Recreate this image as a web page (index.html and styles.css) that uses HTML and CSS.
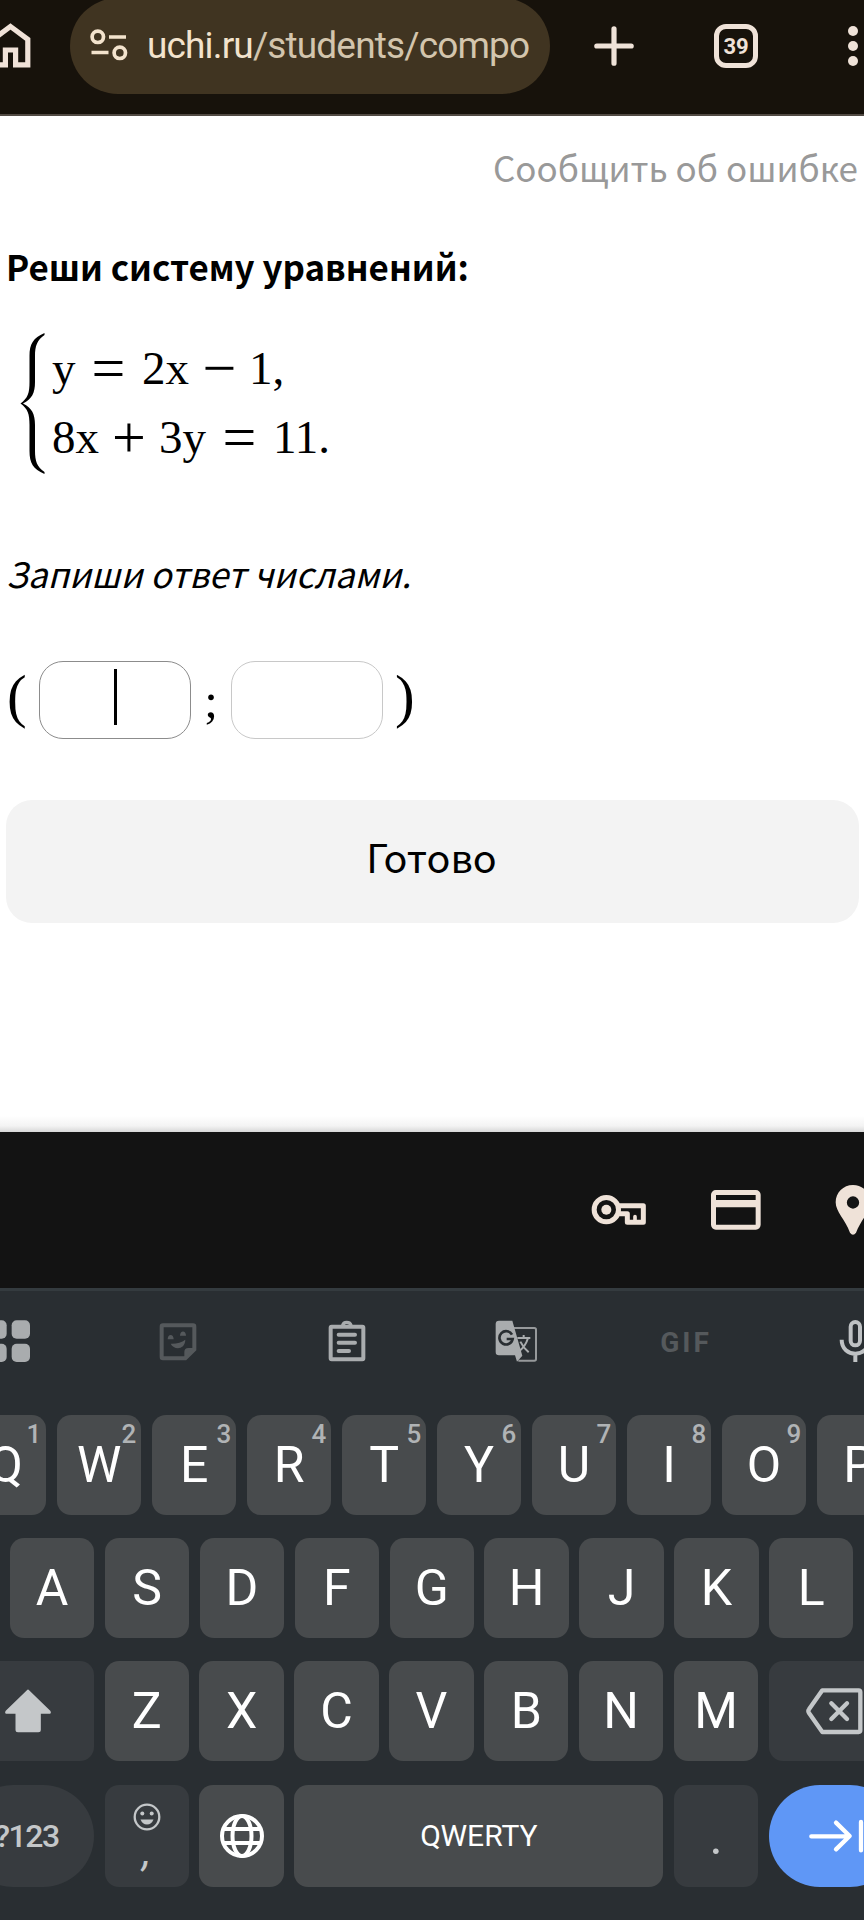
FILE: index.html
```html
<!DOCTYPE html>
<html lang="ru">

<head>
    <meta charset="UTF-8">
    <title>Реши систему уравнений</title>
    <link rel="stylesheet" href="styles.css">
</head>

<body>

    <header class="browser">
        <svg class="home" viewBox="0 0 70 92">
            <path d="M10.5 26.5 L27.8 39.3 V64.8 H15.6 V50 H5.4 V64.8 H-6.8 V39.3 Z" />
        </svg>
        <div class="url">
            <svg class="tune" viewBox="0 0 38 32">
                <circle cx="7.8" cy="7.8" r="5.7" />
                <path d="M19 8 H36 M1.5 23.5 H18.5" />
                <circle cx="29.8" cy="23.8" r="5.7" />
            </svg>
            <span class="address">uchi.ru<span class="path">/students/compo</span></span>
        </div>
        <svg class="plus" viewBox="0 0 40 40">
            <path d="M20 2.8 V37.2 M2.8 20 H37.2" />
        </svg>
        <div class="tabs">39</div>
        <div class="menu"><i></i><i></i><i></i></div>
    </header>

    <main class="task">
        <a class="report">Сообщить об ошибке</a>
        <h2 class="title">Реши систему уравнений:</h2>

        <div class="system">
            <svg class="brace" viewBox="0 0 26 144">
                <path d="M24.500 1 C13 6 9.500 12 9.500 24 V50 C9.500 61 8 66 0.500 71.500 C8 77 9.500 82 9.500 93 V119 C9.500 131 13 137 24.500 142 V140 C17 135 15 129 15 119 V93 C15 82 12 76 3 71.500 C12 67 15 61 15 50 V24 C15 14 17 8 24.500 3 Z" />
            </svg>
            <div class="equations">
                <div class="equation"><span class="y1">y</span><span class="op eq1">=</span><span class="x1">2x</span><span class="op minus">−</span><span>1,</span></div>
                <div class="equation"><span class="x2">8x</span><span class="op plus-sign">+</span><span class="y2">3y</span><span class="op eq2">=</span><span>11.</span></div>
            </div>
        </div>

        <p class="hint">Запиши ответ числами.</p>

        <div class="answer">
            <span class="paren">(</span>
            <div class="field active"><span class="caret"></span></div>
            <span class="semicolon">;</span>
            <div class="field"></div>
            <span class="paren">)</span>
        </div>

        <button class="done" type="button">Готово</button>
    </main>

    <div class="autofill">
        <div class="slot">
            <svg width="60" height="60" viewBox="471 180 180 180">
                <g fill="none" stroke="#efe2d8" stroke-width="15" stroke-linejoin="round">
                    <circle cx="523" cy="269" r="36.5" />
                    <path d="M554 257 H634 V307 H586 V281 H554" />
                    <path d="M609 305 V290" stroke-width="11" stroke-linecap="round" />
                </g>
                <circle cx="523" cy="269" r="15" fill="#efe2d8" />
            </svg>
        </div>
        <div class="slot">
            <svg width="60" height="60" viewBox="822 180 180 180">
                <rect x="844.5" y="217.5" width="134" height="104" rx="7" fill="none" stroke="#efe2d8" stroke-width="15" />
                <path d="M845 240 H979 V262 H845 Z" fill="#efe2d8" />
            </svg>
        </div>
        <div class="slot">
            <svg width="60" height="60" viewBox="1174 180 180 180">
                <path fill="#efe2d8" fill-rule="evenodd" d="M1264 195 C1235 195 1212 218 1212 247 C1212 275 1240 298 1255 338 Q1264 350 1273 338 C1288 298 1316 275 1316 247 C1316 218 1293 195 1264 195 Z M1264 229 A18.5 18.5 0 1 1 1264 266 A18.5 18.5 0 1 1 1264 229 Z" />
            </svg>
        </div>
    </div>

    <section class="keyboard">
        <div class="tools">
            <div class="tool">
                <svg width="42" height="42" viewBox="0 0 126 126" fill="#a9acae">
                    <rect x="1" y="1" width="55" height="55" rx="15" />
                    <rect x="71" y="1" width="55" height="55" rx="15" />
                    <rect x="1" y="71" width="55" height="55" rx="15" />
                    <rect x="71" y="71" width="55" height="55" rx="15" />
                </svg>
            </div>
            <div class="tool">
                <svg width="42" height="42" viewBox="472 150 126 126">
                    <path d="M490 166 H580 Q584 166 584 170 V238 L557 265 H490 Q486 265 486 261 V170 Q486 166 490 166 Z" fill="none" stroke="#55595c" stroke-width="12" />
                    <path d="M554 268 V246 Q554 234 566 234 H588 Z M504 208 C504 191 522 191 522 208 Z M541 197 C541 180 559 180 559 197 Z M513 221 Q540 222 557 209 C556 240 523 241 513 221 Z" fill="#55595c" />
                </svg>
            </div>
            <div class="tool">
                <svg width="42" height="42" viewBox="979 147 126 126" fill="none" stroke="#a9acae" stroke-width="12">
                    <rect x="993" y="167" width="98" height="98" rx="3" />
                    <path d="M1029 163 Q1031 154 1041 154 Q1052 154 1054 163" stroke-width="10" />
                    <path d="M1017 191 H1066 M1017 215.500 H1066 M1017 240 H1048" stroke-linecap="round" />
                </svg>
            </div>
            <div class="tool">
                <svg width="42" height="42" viewBox="188 602 126 126">
                    <path d="M245 626 H306 Q311 626 311 631 V719 Q311 724 306 724 H258" fill="none" stroke="#96999b" stroke-width="6" />
                    <path d="M200 604 H240 L270 709 L254 727 L248 708 H200 Q190 708 190 698 V614 Q190 604 200 604 Z" fill="#a9acae" />
                    <path d="M239 646 A20 20 0 1 0 241 659 H223" fill="none" stroke="#292e32" stroke-width="8" />
                    <path d="M255 656 H294 M274 647 V656 M287 656 Q280 681 259 697 M264 667 Q272 684 289 699" fill="none" stroke="#a9acae" stroke-width="6" />
                </svg>
            </div>
            <div class="tool gif">GIF</div>
            <div class="tool">
                <svg width="42" height="42" viewBox="1206 600 126 126" fill="none" stroke="#bfc2c4" stroke-width="12">
                    <rect x="1256" y="606" width="28" height="70" rx="14" />
                    <path d="M1229 659 C1229 715 1311 715 1311 659 M1270 702 V726" />
                </svg>
            </div>
        </div>

        <div class="row numbers">
            <div class="key first"><sup>1</sup>Q</div>
            <div class="key"><sup>2</sup>W</div>
            <div class="key"><sup>3</sup>E</div>
            <div class="key"><sup>4</sup>R</div>
            <div class="key"><sup>5</sup>T</div>
            <div class="key"><sup>6</sup>Y</div>
            <div class="key"><sup>7</sup>U</div>
            <div class="key"><sup>8</sup>I</div>
            <div class="key"><sup>9</sup>O</div>
            <div class="key">P</div>
        </div>

        <div class="row middle">
            <div class="key">A</div>
            <div class="key">S</div>
            <div class="key">D</div>
            <div class="key">F</div>
            <div class="key">G</div>
            <div class="key">H</div>
            <div class="key">J</div>
            <div class="key">K</div>
            <div class="key">L</div>
        </div>

        <div class="row letters">
            <div class="key wide dark">
                <svg width="50" height="50" viewBox="9 168 150 150">
                    <path d="M84 181 L149 244 Q152 249 147 249 H120 V299 Q120 304 115 304 H54 Q49 304 49 299 V249 H21 Q16 249 19 244 Z" fill="#c4c7c9" stroke="#c4c7c9" stroke-width="5" stroke-linejoin="round" />
                </svg>
            </div>
            <div class="key">Z</div>
            <div class="key">X</div>
            <div class="key">C</div>
            <div class="key">V</div>
            <div class="key">B</div>
            <div class="key">N</div>
            <div class="key">M</div>
            <div class="key wide dark">
                <svg width="60" height="50" viewBox="1118 168 180 150" fill="none" stroke="#c4c7c9" stroke-linejoin="round" stroke-linecap="round">
                    <path d="M1170 181 H1279 Q1284 181 1284 186 V301 Q1284 306 1279 306 H1170 L1130 249 Q1126 243 1130 238 Z" stroke-width="13" />
                    <path d="M1197 220 L1244 267 M1244 220 L1197 267" stroke-width="13" />
                </svg>
            </div>
        </div>

        <div class="row bottom">
            <div class="key wide dark round symbols">?123</div>
            <div class="key dark comma">
                <svg width="28" height="28" viewBox="0 0 28 28">
                    <circle cx="14" cy="14" r="12.3" fill="none" stroke="#c4c7c9" stroke-width="2.3" />
                    <circle cx="9.300" cy="10.500" r="2" fill="#c4c7c9" />
                    <circle cx="18.700" cy="10.500" r="2" fill="#c4c7c9" />
                    <path d="M7.500 16.500 H20.500 Q18.500 21.500 14 21.500 Q9.500 21.500 7.500 16.500 Z" fill="#c4c7c9" />
                </svg>
                <span>,</span>
            </div>
            <div class="key">
                <svg width="46" height="46" viewBox="0 0 46 46" fill="none" stroke="#fff" stroke-width="4">
                    <circle cx="23" cy="23" r="20" />
                    <ellipse cx="23" cy="23" rx="9.500" ry="20" />
                    <path d="M4.500 16 H41.500 M4.500 30 H41.500" />
                </svg>
            </div>
            <div class="key space">QWERTY</div>
            <div class="key dark period">.</div>
            <div class="key wide round enter">
                <svg width="60" height="50" viewBox="1118 543 180 150" fill="none" stroke="#fff" stroke-width="13" stroke-linecap="round" stroke-linejoin="round">
                    <path d="M1137 619 H1250 M1211 578 L1252 618 L1211 658 M1286 576 V661" />
                </svg>
            </div>
        </div>
    </section>

</body>

</html>
```

FILE: styles.css
```css
* {
    box-sizing: border-box;
}

html {
    overflow: hidden;
}

body {
    margin: 0;
    width: 864px;
    height: 1920px;
    overflow: hidden;
    background: #fff;
    font-family: Roboto, sans-serif;
}

svg {
    display: block;
    flex: none;
}

/* Browser bar */
.browser {
    display: flex;
    align-items: center;
    height: 116px;
    padding-bottom: 22px;
    background: #17120b;
    border-bottom: 2px solid #514a43;
    overflow: hidden;
}

.home {
    width: 70px;
    height: 92px;
    fill: none;
    stroke: #f0e2d8;
    stroke-width: 5.2;
}

.url {
    display: flex;
    flex: none;
    align-items: center;
    width: 480px;
    height: 96px;
    padding-left: 20px;
    border-radius: 48px;
    background: #403421;
}

.tune {
    width: 38px;
    height: 32px;
    margin-right: 19px;
    margin-top: -2px;
    fill: none;
    stroke: #f3e3cd;
    stroke-width: 3.7;
}

.address {
    font-size: 37px;
    letter-spacing: -0.850px;
    color: #f3e3cd;
    margin-top: -2px;
    white-space: nowrap;
}

.path {
    color: #d3c5ad;
}

.plus {
    width: 40px;
    height: 40px;
    margin-left: 44px;
    fill: none;
    stroke: #efe2d8;
    stroke-width: 5.2;
    stroke-linecap: round;
}

.tabs {
    flex: none;
    width: 44px;
    height: 44px;
    margin-left: 80px;
    border: 5px solid #efe2d8;
    border-radius: 12px;
    color: #efe2d8;
    font-size: 22px;
    font-weight: 700;
    line-height: 35px;
    text-align: center;
}

.menu {
    display: flex;
    flex: none;
    flex-direction: column;
    gap: 4.600px;
    margin-left: 90px;
}

.menu i {
    width: 10px;
    height: 10px;
    border-radius: 50%;
    background: #efe2d8;
}

/* Task */
.task {
    display: flex;
    flex-direction: column;
    height: 1016px;
    padding: 26px 5px 0 7px;
    background: linear-gradient(#fff, #fff 1000px, #f3f3f3 1010px, #d8d8d8);
    color: #000;
    font-family: "Noto Sans CJK SC", "Noto Sans", sans-serif;
}

.report {
    height: 50px;
    margin-right: 1px;
    line-height: 50px;
    text-align: right;
    font-size: 35px;
    color: #999;
}

.title {
    height: 50px;
    margin: 49px 0 0 -1px;
    line-height: 50px;
    font-size: 34.900px;
    font-weight: 700;
}

.system {
    display: flex;
    height: 144px;
    margin: 41px 0 0 13px;
}

.brace {
    width: 26px;
    height: 144px;
    fill: #000;
}

.equations {
    padding: 2px 0 0 6px;
    font-family: "Liberation Serif", serif;
    font-size: 47px;
}

.equation {
    display: flex;
    height: 69px;
    line-height: 69px;
}

.op {
    display: flex;
    justify-content: center;
    font-size: 60px;
}

.y1 { width: 23px; }
.eq1 { width: 67px; }
.x1 { width: 48px; }
.minus { width: 59px; }
.x2 { width: 47px; }
.plus-sign { width: 60px; }
.y2 { width: 47px; }
.eq2 { width: 67px; }

.hint {
    height: 50px;
    margin: 72px 0 0 -1px;
    line-height: 50px;
    font-size: 35px;
    font-style: italic;
}

.answer {
    display: flex;
    align-items: center;
    height: 78px;
    margin-top: 63px;
    font-family: "Liberation Serif", serif;
}

.paren {
    width: 32px;
    font-size: 59px;
    line-height: 70px;
    padding: 0 0 9px;
}

.field {
    display: flex;
    justify-content: center;
    flex: none;
    width: 152px;
    height: 78px;
    border: 1.500px solid #c8c8c8;
    border-radius: 24px;
}

.active {
    border-color: #8c8c8c;
}

.caret {
    width: 3px;
    height: 56px;
    margin-top: 7px;
    background: #000;
}

.semicolon {
    width: 40px;
    font-size: 49px;
    text-align: center;
}

.field + .paren {
    margin-left: 12px;
}

.done {
    height: 123px;
    margin: 61px 0 0 -1px;
    padding: 0 2px 13px 0;
    border: none;
    border-radius: 26px;
    background: #f3f3f3;
    font-family: inherit;
    font-size: 39.500px;
    color: #000;
}

/* Autofill strip */
.autofill {
    display: flex;
    justify-content: flex-end;
    height: 156px;
    background: #131313;
}

.slot {
    display: flex;
    flex: none;
    align-items: center;
    justify-content: center;
    width: 117.300px;
}

.slot:last-child {
    margin-right: -48px;
}

/* Keyboard */
.keyboard {
    height: 632px;
    border-top: 3px solid #343b3f;
    background: #292e32;
}

.tools {
    display: flex;
    height: 124px;
    padding-bottom: 24px;
    margin-left: -76px;
}

.tool {
    display: flex;
    flex: none;
    align-items: center;
    justify-content: center;
    width: 169px;
}

.tool:last-child {
    padding-left: 2px;
}

.gif {
    padding: 2px 0 0 3px;
    font-size: 28px;
    font-weight: 700;
    letter-spacing: 3px;
    color: #55595c;
}

.row {
    display: flex;
    gap: 10.600px;
    height: 99.500px;
    margin-bottom: 23.700px;
}

.numbers {
    gap: 10.700px;
    margin-left: -38px;
}

.middle {
    margin-left: 10px;
}

.letters,
.bottom {
    margin-left: -38px;
}

.bottom {
    height: 102px;
}

.key {
    display: flex;
    flex: none;
    align-items: center;
    justify-content: center;
    position: relative;
    width: 84.300px;
    border-radius: 14px;
    background: #484b4d;
    color: #fff;
    font-size: 50px;
}

.first {
    padding-left: 3px;
}

.key sup {
    position: absolute;
    top: 4px;
    right: 5px;
    font-size: 26px;
    font-weight: 500;
    line-height: 30px;
    color: #b0b3b5;
}

.wide {
    width: 132px;
}

.dark {
    background: #373b3f;
    color: #c4c7c9;
}

.round {
    border-radius: 51px;
}

.symbols {
    padding-right: 3px;
    font-size: 32px;
    font-weight: 500;
    letter-spacing: -1.500px;
}

.comma {
    flex-direction: column;
    padding-top: 3px;
    font-size: 42px;
    font-style: italic;
    line-height: 41px;
}

.space {
    width: 369px;
    font-size: 30px;
}

.period {
    padding-top: 2px;
}

.enter {
    background: #5f97f6;
}
```
